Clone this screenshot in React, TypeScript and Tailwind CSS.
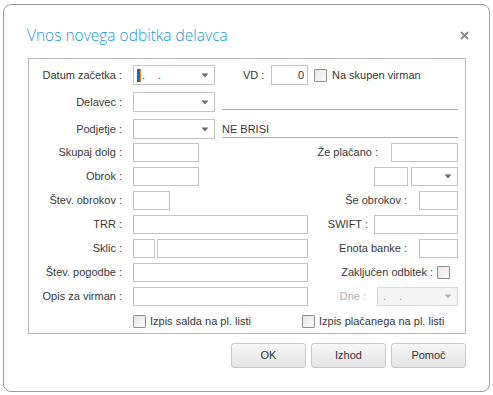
import React from 'react'

const font = { fontFamily: '"Liberation Sans", Arial, sans-serif' }

function Box({ w, className = '' }: { w: string; className?: string }) {
  return <div className={`${w} h-full border border-[#c4c4c4] bg-white ${className}`} />
}

function Arrow({ disabled = false }: { disabled?: boolean }) {
  return (
    <svg width="8" height="5" viewBox="0 0 8 5" className="shrink-0">
      <path d="M0.5 0.5 H7.5 L4 4.5 Z" fill={disabled ? '#b8b8b8' : '#6a6a6a'} />
    </svg>
  )
}

function Select({ w, children }: { w: string; children?: React.ReactNode }) {
  return (
    <div className={`${w} h-full border border-[#c4c4c4] bg-white flex items-center pl-[2px] pr-[5px]`}>
      <div className="flex-1 flex items-center h-full">{children}</div>
      <Arrow />
    </div>
  )
}

function Check() {
  return (
    <div className="w-[13px] h-[13px] shrink-0 border border-[#8f8f8f] rounded-[1px] bg-gradient-to-br from-[#e6e6e6] to-[#fbfbfb]" />
  )
}

function Label({ children }: { children: React.ReactNode }) {
  return <div className="w-[104px] shrink-0 pr-[11px] text-right whitespace-nowrap">{children}</div>
}

function Btn({ children }: { children: React.ReactNode }) {
  return (
    <button className="w-[75px] h-[25px] border border-[#c9c9c9] rounded-[3px] bg-gradient-to-b from-[#f7f7f7] to-[#e4e4e4] text-[11px] text-[#333]">
      {children}
    </button>
  )
}

export default function App() {
  return (
    <div className="w-[493px] h-[395px] bg-white pt-[4px] pl-[3px] text-[#383838] text-[11px]" style={font}>
      <div className="w-[487px] h-[388px] border border-[#9c9c9c] rounded-[8px] flex flex-col">
        {/* Header */}
        <div className="flex items-center justify-between pl-[23px] pr-[20px] pt-[16px] h-[45px]">
          <span className="text-[15.5px] text-[#1a98d8] font-light" style={{ fontFamily: '"Open Sans", "Liberation Sans", sans-serif' }}>
            Vnos novega odbitka delavca
          </span>
          <svg width="9" height="9" viewBox="0 0 9 9">
            <path d="M1 1 L8 8 M8 1 L1 8" stroke="#8a8a8a" strokeWidth="1.8" />
          </svg>
        </div>

        {/* Group box */}
        <div className="ml-[24px] mt-[8px] w-[438px] h-[276px] border border-[#b8b8b8] pt-[6px] pr-[7px] flex flex-col">
          {/* Datum začetka */}
          <div className="flex items-center h-[20px]">
            <Label>Datum začetka :</Label>
            <Select w="w-[82px]">
              <div className="flex items-center h-[13px] ml-[1px]">
                <div className="w-[3px] h-full bg-[#1769c9]" />
                <div className="w-[1px] h-full bg-[#f28a1e]" />
              </div>
              <span className="ml-[1px] tracking-[5px]">. .</span>
            </Select>
            <span className="ml-[28px] w-[28px]">VD :</span>
            <div className="w-[37px] h-full border border-[#c4c4c4] text-right pr-[3px] leading-[18px]">0</div>
            <div className="ml-[6px]"><Check /></div>
            <span className="ml-[5px]">Na skupen virman</span>
          </div>

          {/* Delavec */}
          <div className="flex items-center h-[20px] mt-[7px]">
            <Label>Delavec :</Label>
            <Select w="w-[82px]" />
            <div className="ml-[7px] flex-1 self-stretch border-b border-[#b0b0b0] mb-[2px]" />
          </div>

          {/* Podjetje */}
          <div className="flex items-center h-[20px] mt-[7px]">
            <Label>Podjetje :</Label>
            <Select w="w-[82px]" />
            <div className="ml-[7px] flex-1 border-b border-[#b0b0b0] leading-[15px] mt-[1px]">NE BRISI</div>
          </div>

          {/* Skupaj dolg */}
          <div className="flex items-center h-[19px] mt-[4px]">
            <Label>Skupaj dolg :</Label>
            <Box w="w-[66px]" />
            <span className="ml-auto">Že plačano :</span>
            <Box w="w-[67px]" className="ml-[13px]" />
          </div>

          {/* Obrok */}
          <div className="flex items-center h-[19px] mt-[5px]">
            <Label>Obrok :</Label>
            <Box w="w-[66px]" />
            <Box w="w-[34px]" className="ml-auto" />
            <div className="ml-[3px] h-full">
              <Select w="w-[47px]" />
            </div>
          </div>

          {/* Štev. obrokov */}
          <div className="flex items-center h-[19px] mt-[5px]">
            <Label>Štev. obrokov :</Label>
            <Box w="w-[37px]" />
            <span className="ml-auto">Še obrokov :</span>
            <Box w="w-[39px]" className="ml-[12px]" />
          </div>

          {/* TRR */}
          <div className="flex items-center h-[19px] mt-[5px]">
            <Label>TRR :</Label>
            <Box w="w-[175px]" />
            <span className="ml-auto">SWIFT :</span>
            <Box w="w-[84px]" className="ml-[6px]" />
          </div>

          {/* Sklic */}
          <div className="flex items-center h-[19px] mt-[5px]">
            <Label>Sklic :</Label>
            <Box w="w-[22px]" />
            <Box w="w-[151px]" className="ml-[2px]" />
            <span className="ml-auto">Enota banke :</span>
            <Box w="w-[39px]" className="ml-[12px]" />
          </div>

          {/* Štev. pogodbe */}
          <div className="flex items-center h-[19px] mt-[5px]">
            <Label>Štev. pogodbe :</Label>
            <Box w="w-[175px]" />
            <span className="ml-auto">Zaključen odbitek :</span>
            <div className="ml-[4px] mr-[8px]"><Check /></div>
          </div>

          {/* Opis za virman */}
          <div className="flex items-center h-[19px] mt-[5px]">
            <Label>Opis za virman :</Label>
            <Box w="w-[175px]" />
            <span className="ml-auto text-[#b0b0b0]">Dne :</span>
            <div className="ml-[11px] w-[81px] h-full border border-[#dadada] bg-[#f5f5f5] flex items-center pl-[5px] pr-[5px] text-[#b0b0b0]">
              <span className="flex-1 tracking-[5px]">. .</span>
              <Arrow disabled />
            </div>
          </div>

          {/* Checkboxes */}
          <div className="flex items-center h-[14px] mt-[8px] pl-[104px]">
            <Check />
            <span className="ml-[4px] w-[152px]">Izpis salda na pl. listi</span>
            <Check />
            <span className="ml-[4px]">Izpis plačanega na pl. listi</span>
          </div>
        </div>

        {/* Buttons */}
        <div className="flex justify-end gap-[5px] pr-[23px] mt-[9px]">
          <Btn>OK</Btn>
          <Btn>Izhod</Btn>
          <Btn>Pomoč</Btn>
        </div>
      </div>
    </div>
  )
}
